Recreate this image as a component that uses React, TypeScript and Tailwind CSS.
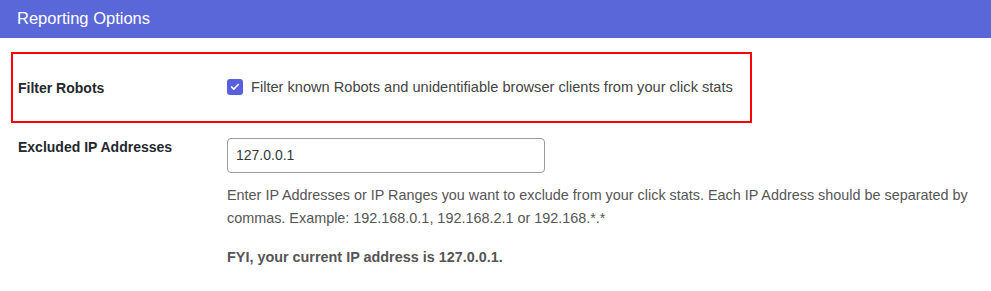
import { Check } from 'lucide-react'

const font = { fontFamily: '"Liberation Sans", Arial, sans-serif' }

export default function App() {
  return (
    <div className="w-[991px] h-[291px] bg-white overflow-hidden" style={font}>
      {/* Section header */}
      <div className="h-[38px] bg-[#5a67d8] flex items-center px-[17px]">
        <span className="text-white text-[16.5px] -mt-[1px]">Reporting Options</span>
      </div>

      {/* Filter Robots row, outlined */}
      <div className="mt-[14px] ml-[11px] w-[741px] h-[71px] border-2 border-[#ff0000] flex items-center pl-[5px]">
        <div className="w-[209px] text-[14px] font-bold text-[#23282d] pt-[1px]">Filter Robots</div>
        <label className="flex items-center gap-2 text-[14.6px] text-[#444]">
          <span className="w-4 h-4 rounded-[3px] bg-[#5a5fe0] flex items-center justify-center">
            <Check className="w-[10px] h-[10px] text-white" strokeWidth={4} />
          </span>
          Filter known Robots and unidentifiable browser clients from your click stats
        </label>
      </div>

      {/* Excluded IPs row */}
      <div className="flex pl-[18px] pt-[14px]">
        <div className="w-[209px] text-[14px] font-bold text-[#23282d] leading-[20px]">Excluded IP Addresses</div>
        <div className="w-[755px] pt-[1px]">
          <div className="w-[318px] h-[35px] border border-[#9a9a9a] rounded-[4px] flex items-center px-[8px] text-[14px] text-[#32373c]">
            127.0.0.1
          </div>
          <p className="mt-[11px] text-[14.4px] leading-[23px] text-[#555]">
            Enter IP Addresses or IP Ranges you want to exclude from your click stats. Each IP Address should be separated by commas. Example: 192.168.0.1, 192.168.2.1 or 192.168.*.*
          </p>
          <p className="mt-4 text-[14.4px] leading-[23px] font-bold text-[#555]">
            FYI, your current IP address is 127.0.0.1.
          </p>
        </div>
      </div>
    </div>
  )
}
